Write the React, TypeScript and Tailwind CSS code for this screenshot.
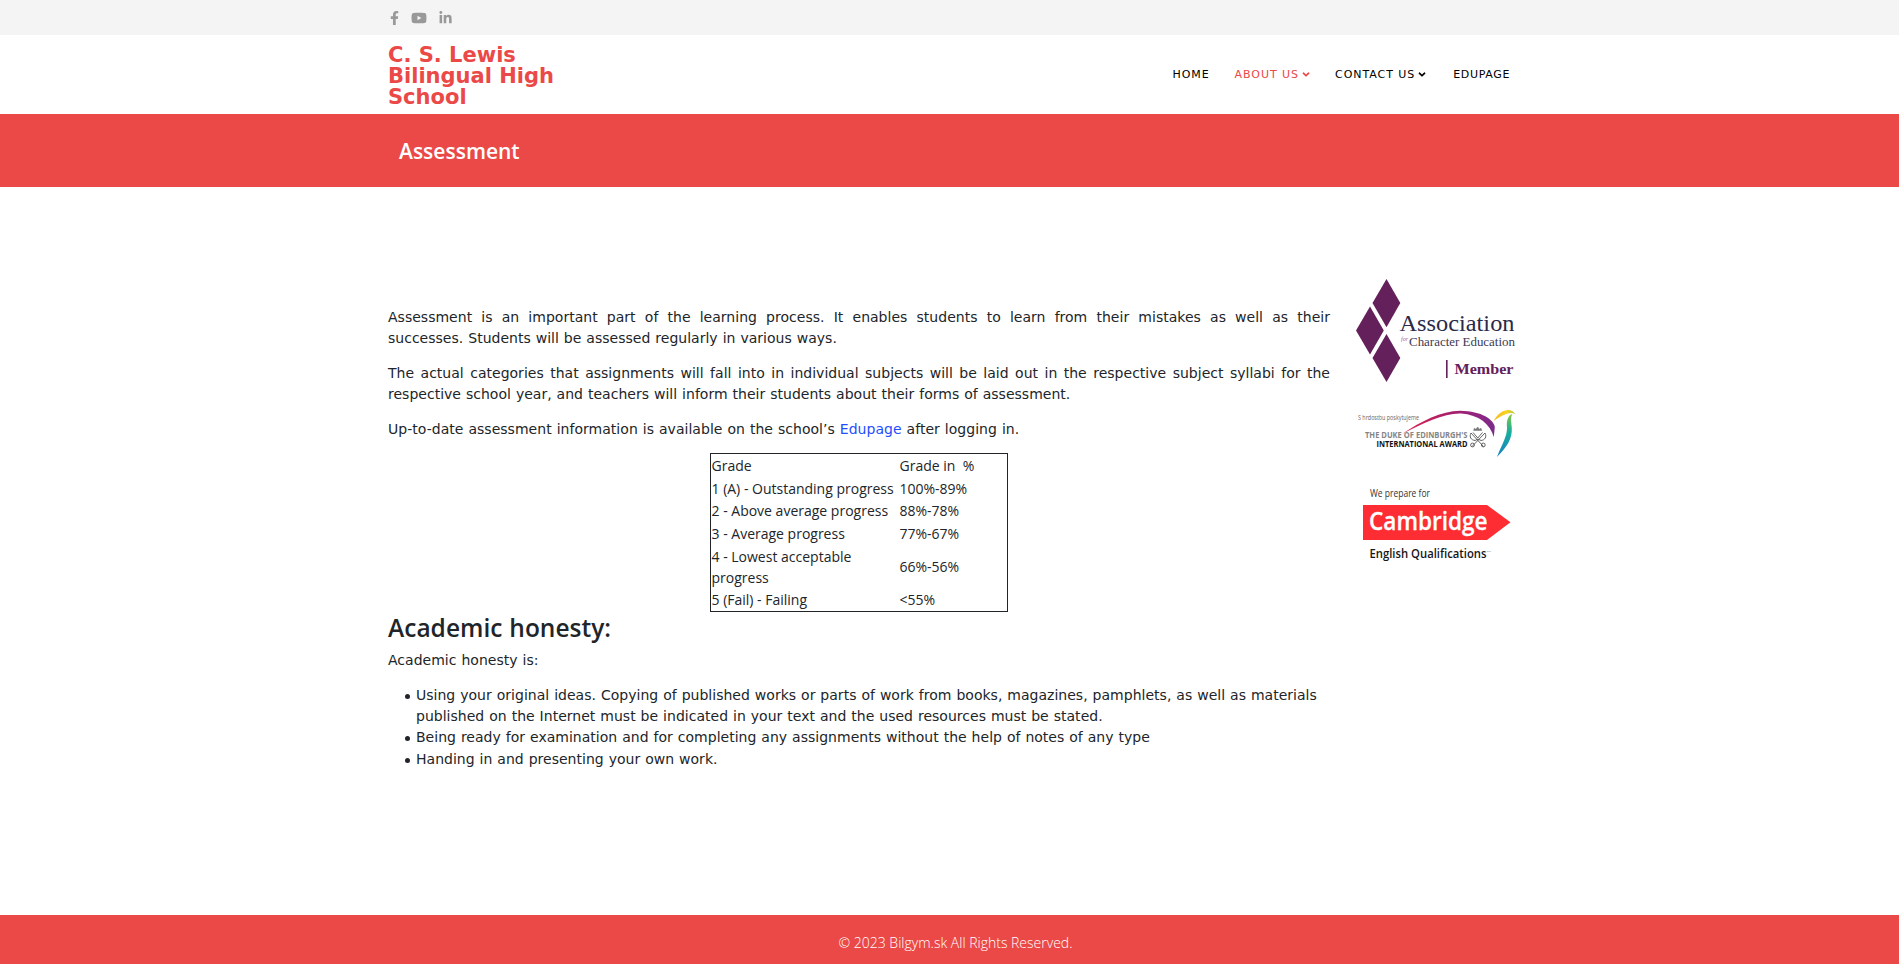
import { FaFacebookF, FaYoutube, FaLinkedinIn, FaAngleDown } from "react-icons/fa";

const GRADES = [
  ["Grade", "Grade in \u00a0%"],
  ["1 (A) - Outstanding progress", "100%-89%"],
  ["2 - Above average progress", "88%-78%"],
  ["3 - Average progress", "77%-67%"],
  ["4 - Lowest acceptable progress", "66%-56%"],
  ["5 (Fail) - Failing", "<55%"],
];

const HONESTY = [
  "Using your original ideas. Copying of published works or parts of work from books, magazines, pamphlets, as well as materials published on the Internet must be indicated in your text and the used resources must be stated.",
  "Being ready for examination and for completing any assignments without the help of notes of any type",
  "Handing in and presenting your own work.",
];

function CharacterEducationLogo() {
  return (
    <svg className="block" width="200" height="130" viewBox="0 0 200 130">
      <g fill="#64205a">
        <path d="M46.5 14 60.3 38 46.5 62.3 32.5 38Z" />
        <path d="M30 41.5 43.8 65.5 30 89.6 16 65.5Z" />
        <path d="M46.5 69 60.3 93 46.5 117 32.5 93Z" />
        <rect x="106" y="95" width="1.6" height="18" />
      </g>
      <g fontFamily="'Liberation Serif', serif">
        <text x="59.5" y="65.5" fontSize="22.5" fill="#2b2a48" textLength="115" lengthAdjust="spacingAndGlyphs">Association</text>
        <text x="61" y="76" fontSize="6" fontStyle="italic" fill="#a0609a">for</text>
        <text x="69" y="81" fontSize="12.5" fill="#3b3a55" textLength="106" lengthAdjust="spacingAndGlyphs">Character Education</text>
        <text x="114.5" y="108.5" fontSize="15" fontWeight="700" fill="#64205a" textLength="59" lengthAdjust="spacingAndGlyphs">Member</text>
      </g>
    </svg>
  );
}

function DukeAwardLogo() {
  return (
    <svg className="block" width="200" height="70" viewBox="0 0 200 70">
      <defs>
        <linearGradient id="arc" x1="0" x2="1">
          <stop offset="0" stopColor="#e0264c" />
          <stop offset="0.45" stopColor="#b01e68" />
          <stop offset="1" stopColor="#7d2a8c" />
        </linearGradient>
        <linearGradient id="wing" x1="0" x2="0" y1="0" y2="1">
          <stop offset="0" stopColor="#8cc63f" />
          <stop offset="0.4" stopColor="#18b09a" />
          <stop offset="1" stopColor="#1681c4" />
        </linearGradient>
        <linearGradient id="head" x1="0" x2="1">
          <stop offset="0" stopColor="#f5b51b" />
          <stop offset="0.6" stopColor="#f9d423" />
          <stop offset="1" stopColor="#a9c938" />
        </linearGradient>
      </defs>
      <path d="M62 39C82 26 101 16 120 15.8C142 16 154 25 154.8 32L153.8 42C150 29 139 20 121 18.6C104 18 84 28 62 39Z" fill="url(#arc)" />
      <path d="M153.5 26C158 18 164 14.5 169 15C172 15.2 174 17 175.5 19.5C172.5 17.5 169.5 17.8 166.5 19C161.5 20.5 158 23 153.5 26Z" fill="url(#head)" />
      <path d="M172.5 18.7C167 21 166.5 27 167 32C167.5 41 162 49 157 62C167 52 172.3 44 171.8 33C171.5 27 170 23 172.5 18.7Z" fill="url(#wing)" />
      <g fontFamily="'Open Sans', sans-serif">
        <text x="18" y="25" fontSize="6.6" fill="#666" textLength="61" lengthAdjust="spacingAndGlyphs">S hrdosťou poskytujeme</text>
        <text x="25" y="43.2" fontSize="8.8" fontWeight="700" fill="#858585" textLength="102.5" lengthAdjust="spacingAndGlyphs">THE DUKE OF EDINBURGH'S</text>
        <text x="36.5" y="52" fontSize="8.8" fontWeight="700" fill="#111" textLength="91" lengthAdjust="spacingAndGlyphs">INTERNATIONAL AWARD</text>
      </g>
      <g fill="none" stroke="#555" strokeWidth="0.9">
        <path d="M134.3 33.2 133.6 35.5H141.8L141 33.2 139.3 34.2 137.7 32 136 34.2Z" fill="#777" stroke="#777" strokeWidth="0.5" />
        <path d="M131 38C129 42 131 45 135 45.5L138 44 141 45.5C145 45 147 42 145 38" />
        <path d="M131 38 143.5 51.5M145 38 132 51.5" />
        <circle cx="132.5" cy="50" r="1.9" />
        <circle cx="143.3" cy="50" r="1.9" />
        <path d="M133 37.5 137.8 43 142.5 37.5" />
      </g>
    </svg>
  );
}

function CambridgeLogo() {
  return (
    <svg className="block" width="200" height="90" viewBox="0 0 200 90">
      <path d="M23 25H147L170.5 42.3 147 60H23Z" fill="#fe2d34" />
      <g fontFamily="'Open Sans', sans-serif">
        <text x="30" y="17.3" fontSize="10.5" fill="#333" textLength="60" lengthAdjust="spacingAndGlyphs">We prepare for</text>
        <text x="29" y="49.6" fontSize="24.5" fontWeight="600" fill="#fff" stroke="#fff" strokeWidth="0.3" textLength="118.5" lengthAdjust="spacingAndGlyphs">Cambridge</text>
        <text x="29.5" y="77.6" fontSize="12.5" fontWeight="600" fill="#161616" textLength="117" lengthAdjust="spacingAndGlyphs">English Qualifications</text>
        <text x="147" y="72" fontSize="2.5" fill="#555">TM</text>
      </g>
    </svg>
  );
}

export default function App() {
  return (
    <div className="flex h-[964px] flex-col overflow-hidden bg-white font-['Verdana','DejaVu_Sans',sans-serif] text-sm leading-[21px] text-[#212529]">
      <div className="h-[35px] bg-[#f4f4f4]">
        <div className="mx-auto flex h-full w-[1123px] items-center text-[#999]">
          <FaFacebookF className="ml-px h-[14px] w-[11px]" />
          <FaYoutube className="ml-[11px] h-[14px] w-[16px]" />
          <FaLinkedinIn className="ml-[12px] h-[14px] w-[13px]" />
        </div>
      </div>
      <header className="mx-auto flex h-[79px] w-[1123px] items-center justify-between">
        <div className="w-[180px] pt-[3px] text-[21px] leading-[21px] font-bold text-[#eb4947]">C. S. Lewis Bilingual High School</div>
        <nav className="flex items-center gap-[25px] pr-[1px] text-[11px] tracking-[0.95px] text-black">
          <a>HOME</a>
          <a className="flex items-center gap-[3px] text-[#eb4947]">ABOUT US<FaAngleDown className="h-[11px] w-[8px]" /></a>
          <a className="flex items-center gap-[3px]">CONTACT US<FaAngleDown className="h-[11px] w-[8px]" /></a>
          <a className="ml-[2px] tracking-[0.65px]">EDUPAGE</a>
        </nav>
      </header>
      <div className="h-[73px] bg-[#eb4947]">
        <h1 className="mx-auto w-[1123px] pl-[11px] font-['Open_Sans',sans-serif] text-[21px] leading-[75px] font-semibold text-white">Assessment</h1>
      </div>
      <main className="mx-auto flex w-[1123px] flex-1 justify-between">
        <article className="w-[942px] shrink-0 pt-[120px] tracking-[0.015px] [word-spacing:0.5px]">
          <div className="space-y-[14px] text-justify">
            <p>
              <span className="block [text-align-last:justify]">Assessment is an important part of the learning process. It enables students to learn from their mistakes as well as their</span>
              successes. Students will be assessed regularly in various ways.
            </p>
            <p>The actual categories that assignments will fall into in individual subjects will be laid out in the respective subject syllabi for the respective school year, and teachers will inform their students about their forms of assessment.</p>
            <p className="tracking-[0.03px]">Up-to-date assessment information is available on the school’s <a className="text-[#1f4dff]">Edupage</a> after logging in.</p>
          </div>
          <table className="mt-[13px] ml-[322px] w-[298px] table-fixed border-separate border-spacing-0 border border-[#212529] font-['Open_Sans',sans-serif] tracking-normal [word-spacing:0]">
            <tbody>
              {GRADES.map(([grade, percent]) => (
                <tr key={grade}>
                  <td className="w-[188px] py-[0.87px] pl-[0.5px]">{grade}</td>
                  <td className="py-[0.87px] pl-[0.5px]">{percent}</td>
                </tr>
              ))}
            </tbody>
          </table>
          <h2 className="-mt-px font-['Open_Sans',sans-serif] text-[24.5px] leading-[33px] font-semibold">Academic honesty:</h2>
          <p className="mt-[6px]">Academic honesty is:</p>
          <ul className="mt-[14px] pl-[17px]">
            {HONESTY.map((item) => (
              <li key={item} className="flex gap-[6px] last:mt-px">
                <span className="mt-[9px] size-[5px] shrink-0 rounded-full bg-[#212529]" />
                <span>{item}</span>
              </li>
            ))}
          </ul>
        </article>
        <aside className="-mr-[29px] flex w-[200px] flex-col pt-[78px]">
          <CharacterEducationLogo />
          <DukeAwardLogo />
          <div className="mt-[15px]"><CambridgeLogo /></div>
        </aside>
      </main>
      <footer className="h-[49px] bg-[#eb4947] pt-[17px] pl-[12px] text-center font-['Open_Sans',sans-serif] font-light text-white">© 2023 Bilgym.sk All Rights Reserved.</footer>
    </div>
  );
}
